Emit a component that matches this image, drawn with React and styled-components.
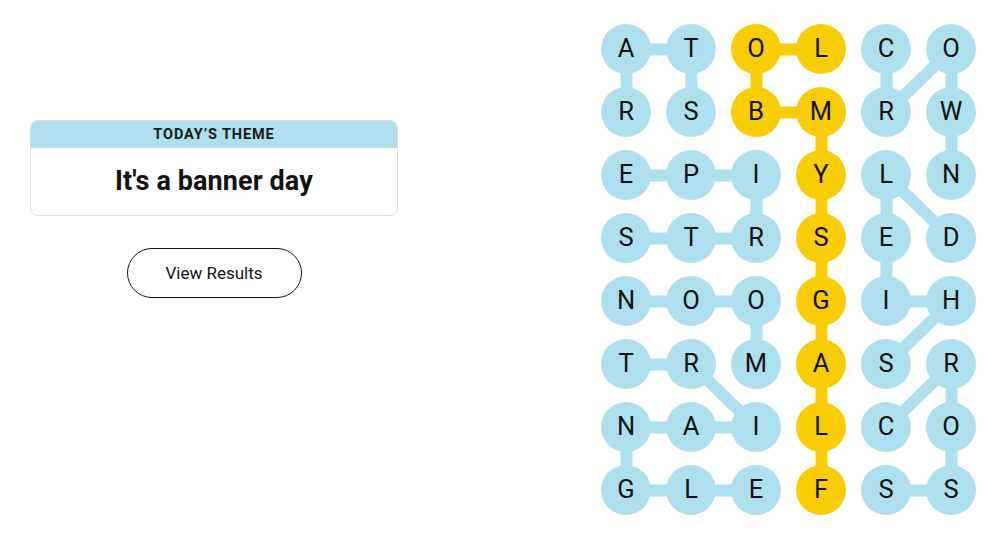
import React from "react";
import styled, { createGlobalStyle } from "styled-components";

const GlobalStyle = createGlobalStyle`
  html, body { margin: 0; padding: 0; background: #ffffff; }
  body { font-family: Roboto, "Liberation Sans", Arial, sans-serif; color: #121212; }
  * { box-sizing: border-box; }
`;

const BLUE = "#aedfee";
const YELLOW = "#f8cd05";
const COL = 65;
const ROW = 63;

const LETTERS = [
  "ATOLCO",
  "RSBMRW",
  "EPIYLN",
  "STRSED",
  "NOOGIH",
  "TRMASR",
  "NAILCO",
  "GLEFSS",
];

// words as paths of [col,row]
const WORDS = [
  { spangram: true, path: [[3,7],[3,6],[3,5],[3,4],[3,3],[3,2],[3,1],[2,1],[2,0],[3,0]] },
  { path: [[1,1],[1,0],[0,0],[0,1]] },
  { path: [[0,3],[1,3],[2,3],[2,2],[1,2],[0,2]] },
  { path: [[4,0],[4,1],[5,0],[5,1],[5,2]] },
  { path: [[4,5],[5,4],[4,4],[4,3],[4,2],[5,3]] },
  { path: [[4,6],[5,5],[5,6],[5,7],[4,7]] },
  { path: [[0,5],[1,5],[2,6],[1,6],[0,6],[0,7],[1,7],[2,7]] },
  { path: [[2,5],[2,4],[1,4],[0,4]] },
];

const yellowCells = new Set(WORDS[0].path.map(([c, r]) => `${c},${r}`));

const Page = styled.main`
  display: flex;
  justify-content: space-between;
  align-items: flex-start;
  width: 1000px;
  height: 538px;
  padding: 17.5px 16.5px 0 30px;
  overflow: hidden;
`;

const Side = styled.section`
  width: 368px;
  margin-top: 102.5px;
  display: flex;
  flex-direction: column;
  align-items: center;
  gap: 32px;
`;

const ThemeCard = styled.div`
  width: 100%;
  border: 1px solid #dcdcdc;
  border-radius: 8px;
  overflow: hidden;
  background: #fff;
`;

const ThemeHeader = styled.div`
  background: ${BLUE};
  height: 27px;
  display: flex;
  align-items: center;
  justify-content: center;
  font-family: Roboto, "Liberation Sans", sans-serif;
  font-weight: 700;
  font-size: 14.5px;
  letter-spacing: 0.9px;
  color: #1a1a1a;
  text-transform: uppercase;
`;

const ThemeTitle = styled.h1`
  margin: 0;
  height: 67px;
  display: flex;
  align-items: center;
  justify-content: center;
  font-family: Roboto, "Liberation Sans", sans-serif;
  font-weight: 700;
  font-size: 27px;
  letter-spacing: 0.1px;
  color: #121212;
  padding-bottom: 2px;
`;

const ResultsButton = styled.button`
  width: 175px;
  height: 50px;
  border: 1px solid #121212;
  border-radius: 25px;
  background: #fff;
  font-family: Roboto, "Liberation Sans", sans-serif;
  font-size: 17px;
  color: #121212;
  cursor: pointer;
`;

const Board = styled.div`
  position: relative;
  display: grid;
  grid-template-columns: repeat(6, ${COL}px);
  grid-template-rows: repeat(8, ${ROW}px);
`;

const Links = styled.svg`
  position: absolute;
  inset: 0;
  z-index: 0;
  pointer-events: none;
`;

const Cell = styled.div`
  position: relative;
  z-index: 1;
  display: flex;
  align-items: center;
  justify-content: center;
`;

const Letter = styled.span`
  width: 50px;
  height: 50px;
  border-radius: 50%;
  background: ${(p) => (p.$spangram ? YELLOW : BLUE)};
  display: flex;
  align-items: center;
  justify-content: center;
  font-family: Roboto, "Liberation Sans", sans-serif;
  font-size: 25.5px;
  font-weight: 400;
  color: #121212;
  line-height: 1;
`;

const cx = (c) => COL / 2 + c * COL;
const cy = (r) => ROW / 2 + r * ROW;

export default function App() {
  return (
    <>
      <GlobalStyle />
      <Page>
        <Side>
          <ThemeCard>
            <ThemeHeader>Today’s Theme</ThemeHeader>
            <ThemeTitle>It's a banner day</ThemeTitle>
          </ThemeCard>
          <ResultsButton>View Results</ResultsButton>
        </Side>
        <Board>
          <Links width={COL * 6} height={ROW * 8}>
            {WORDS.map((w, i) => (
              <polyline
                key={i}
                points={w.path.map(([c, r]) => `${cx(c)},${cy(r)}`).join(" ")}
                fill="none"
                stroke={w.spangram ? YELLOW : BLUE}
                strokeWidth="12"
                strokeLinejoin="round"
              />
            ))}
          </Links>
          {LETTERS.map((row, r) =>
            row.split("").map((ch, c) => (
              <Cell key={`${r}-${c}`}>
                <Letter $spangram={yellowCells.has(`${c},${r}`)}>{ch}</Letter>
              </Cell>
            ))
          )}
        </Board>
      </Page>
    </>
  );
}
